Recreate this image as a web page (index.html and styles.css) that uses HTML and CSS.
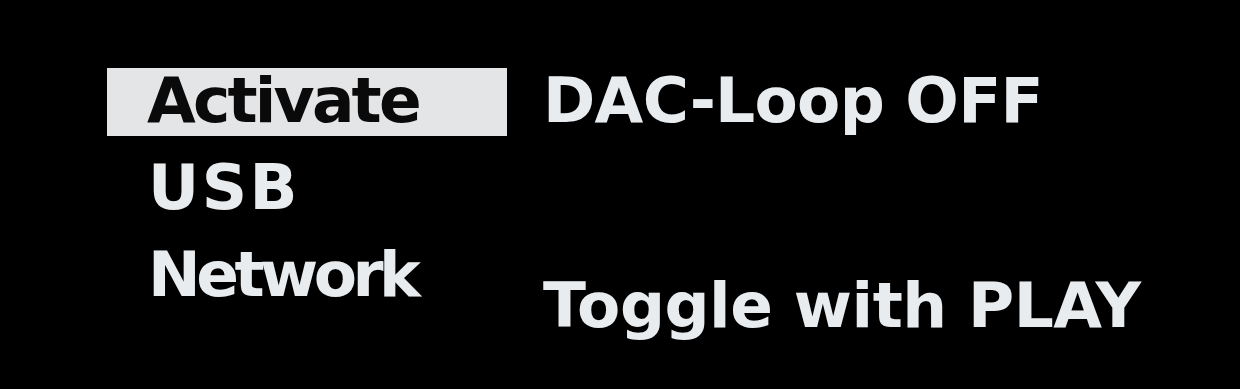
FILE: index.html
```html
<!DOCTYPE html>
<html lang="en">
<head>
<meta charset="utf-8">
<title>DAC-Loop</title>
<link rel="stylesheet" href="styles.css">
</head>
<body>
<div class="screen">
  <ul class="menu">
    <li class="item selected"><span class="t-activate">Activate</span></li>
    <li class="item"><span class="t-usb">USB</span></li>
    <li class="item"><span class="t-network">Network</span></li>
  </ul>
  <div class="info">
    <div class="status t-dac">DAC-Loop OFF</div>
    <div class="hint t-toggle">Toggle with PLAY</div>
  </div>
</div>
</body>
</html>
```
FILE: styles.css
```css
html, body {
  margin: 0;
  padding: 0;
  background: #000;
}
body {
  width: 1240px;
  height: 389px;
  overflow: hidden;
  font-family: "DejaVu Sans", "Liberation Sans", sans-serif;
  font-weight: bold;
  font-size: 63px;
  color: #e9ecef;
}
.screen {
  display: flex;
  padding: 68px 0 0 107px;
  gap: 36px;
}
.menu {
  list-style: none;
  margin: 0;
  padding: 0;
  width: 400px;
  display: flex;
  flex-direction: column;
  gap: 19px;
}
.item {
  height: 68px;
  line-height: 66px;
  padding-left: 41px;
  white-space: nowrap;
}
.item.selected {
  background: #e4e5e6;
  color: #0a0a0a;
  padding-left: 40px;
}
.info {
  display: flex;
  flex-direction: column;
}
.status {
  height: 68px;
  line-height: 66px;
  white-space: nowrap;
}
.hint {
  margin-top: 137px;
  margin-left: 0;
  line-height: 66px;
  white-space: nowrap;
}
.t-activate { letter-spacing: -2.8px; }
.t-usb { letter-spacing: 2.5px; }
.t-network { letter-spacing: -4.5px; }
.t-dac { letter-spacing: -0.7px; }
.t-toggle { letter-spacing: -0.5px; }
```
